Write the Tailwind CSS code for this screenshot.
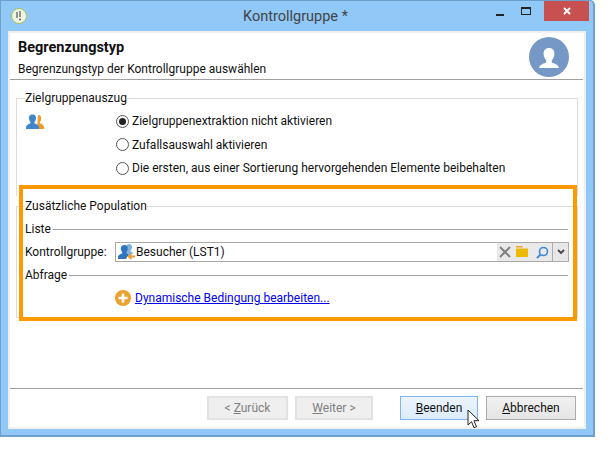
<!DOCTYPE html>
<html lang="de">
<head>
  <meta charset="UTF-8">
  <title>Kontrollgruppe</title>
  <script src="https://cdn.jsdelivr.net/npm/@tailwindcss/browser@4"></script>
</head>
<body class="bg-white w-[615px] h-[467px] overflow-hidden relative font-['Roboto',sans-serif] text-[12px] text-[#111]">
  <div class="w-[595px] h-[437px] flex flex-col bg-[#90c8f8] border border-[#6f9fcb] rounded-tr-[5px] border-b-2 border-r-2">
    <!-- title bar -->
    <div class="h-[30px] shrink-0 flex items-center relative">
      <svg class="ml-[10px] w-[16px] h-[16px]" viewBox="0 0 16 16">
        <circle cx="8" cy="8" r="7.5" fill="#eef3e2" stroke="#a4c25c"/>
        <path d="M6 4v6M9 3v6" stroke="#777" stroke-width="1.5"/>
        <circle cx="9" cy="11.5" r="1" fill="#555"/>
      </svg>
      <span class="absolute left-[242px] top-[5px] text-[14.5px] text-[#444]">Kontrollgruppe *</span>
      <div class="ml-auto flex items-start self-start mr-[4px]">
        <div class="w-[20px] h-[20px] flex items-end justify-center pb-[5px] mr-[6px]"><div class="w-[8px] h-[2px] bg-[#222]"></div></div>
        <div class="w-[20px] h-[20px] flex items-center justify-center mr-[8px]"><div class="w-[10px] h-[8px] border border-t-2 border-[#222]"></div></div>
        <div class="w-[45px] h-[20px] bg-[#c75050] flex items-center justify-center">
          <svg class="w-[8px] h-[8px]" viewBox="0 0 8 8"><path d="M1 1l6 6M7 1l-6 6" stroke="#fff" stroke-width="1.8"/></svg>
        </div>
      </div>
    </div>

    <!-- client area -->
    <div class="flex-1 mx-[7px] mb-[6px] bg-white border-2 border-[#f0f0f0] flex flex-col">
      <div class="h-[47px] shrink-0 flex border-b border-[#a0a0a0] mr-[1px] relative overflow-hidden">
        <div class="pl-[8px]">
          <h1 class="font-bold text-[14.5px] leading-[18px] mt-[6px]">Begrenzungstyp</h1>
          <p class="leading-[17px] mt-[4px]">Begrenzungstyp der Kontrollgruppe auswählen</p>
        </div>
        <div class="absolute left-[519px] top-[4px] w-[40px] h-[40px] rounded-full bg-[#7698c6]">
          <svg class="w-[40px] h-[40px]" viewBox="0 0 40 40">
            <path d="M20 11c3.6 0 5.6 2.6 5.4 6-.2 3-1.4 5-2.6 6.200v2.200c2.400 1.200 6.800 2 7.200 5.600H10c.4-3.600 4.800-4.400 7.200-5.600v-2.200c-1.200-1.200-2.400-3.200-2.600-6.200-.2-3.400 1.800-6 5.400-6z" fill="#fff"/>
          </svg>
        </div>
      </div>

      <div class="flex-1 flex flex-col pl-[6px]">
        <!-- group 1 -->
        <fieldset class="mt-[10px] h-[106px] border border-[#dcdcdc] border-b-0 mr-[6px] relative">
          <legend class="ml-[8px] leading-[16px] bg-white">Zielgruppenauszug</legend>
          <svg class="absolute left-[9px] top-[8px] w-[18px] h-[16px]" viewBox="0 0 18 16">
            <path d="M12 1c2.500 0 3.500 2 3.200 4-.2 1.500-.8 2.500-1.400 3v1c1 .6 3.800 1.200 4.200 4v2h-7z" fill="#ef9a2d"/>
            <path d="M6.500 .5c2.800 0 3.800 2.200 3.500 4.300-.2 1.600-.9 2.700-1.500 3.300v1.200c1.200.6 4 1.300 4.500 4V15H0v-1.700c.5-2.700 3.300-3.400 4.500-4V8.100C3.900 7.500 3.200 6.400 3 4.800 2.700 2.700 3.700 .5 6.500 .5z" fill="#3d86cc"/>
          </svg>
          <div class="ml-[99px] mt-[3px] flex flex-col">
            <label class="h-[24px] flex items-center gap-[3px]">
              <span class="w-[13px] h-[13px] rounded-full border border-[#555] flex items-center justify-center"><span class="w-[7px] h-[7px] rounded-full bg-[#222]"></span></span>
              Zielgruppenextraktion nicht aktivieren
            </label>
            <label class="h-[23px] flex items-center gap-[3px]">
              <span class="w-[13px] h-[13px] rounded-full border border-[#555]"></span>
              Zufallsauswahl aktivieren
            </label>
            <label class="h-[24px] flex items-center gap-[3px]">
              <span class="w-[13px] h-[13px] rounded-full border border-[#555]"></span>
              Die ersten, aus einer Sortierung hervorgehenden Elemente beibehalten
            </label>
          </div>
        </fieldset>

        <!-- group 2 -->
        <fieldset class="mt-[2px] h-[120px] border border-[#dcdcdc] mr-[6px]">
          <legend class="ml-[8px] leading-[16px] bg-white">Zusätzliche Population</legend>
          <div class="pl-[8px] pr-[9px] flex flex-col">
            <div class="h-[16px] mt-[7px] flex items-center gap-[2px]"><span>Liste</span><div class="flex-1 h-px bg-[#a0a0a0]"></div></div>
            <div class="mt-[5px] mr-[-1px] h-[20px] flex items-center">
              <span class="w-[90px] shrink-0">Kontrollgruppe:</span>
              <div class="flex-1 h-[20px] border border-[#a8a8a8] border-r-0 flex items-center pl-[1px]">
                <svg class="w-[18px] h-[18px] shrink-0" viewBox="0 0 18 18">
                  <path d="M12 1c2.500 0 3.200 2 3 3.500-.2 1.500-.8 2.400-1.300 2.900v1.200c1 .5 2 .9 2.500 1.800L9 14V3c.6-1.200 1.800-2 3-2z" fill="#7fb0e0"/>
                  <path d="M7.500 2c2.600 0 3.500 2.200 3.200 4-.2 1.500-.9 2.500-1.400 3v1.300c.8.400 1.700.7 2.300 1.200L9 16H1v-2.200c.4-2.200 3.200-3 4.200-3.500V9C4.700 8.500 4 7.500 3.800 6 3.500 4.200 4.900 2 7.500 2z" fill="#2f75bd"/>
                  <path d="M18 12.500h-3.500V10L10 13.500l4.500 3.500v-2.500H18z" fill="#ef9a2d"/>
                </svg>
                <span class="ml-[1px]">Besucher (LST1)</span>
                <div class="ml-auto h-[18px] w-[55px] bg-[#e9e9e9] flex items-center gap-[5px] pl-[2px]">
                  <svg class="w-[12px] h-[12px]" viewBox="0 0 12 12"><path d="M1 1l10 10M11 1L1 11" stroke="#808080" stroke-width="2"/></svg>
                  <svg class="w-[12px] h-[12px]" viewBox="0 0 12 12"><path d="M0 0h6l1 1.500H0z" fill="#f59e2a"/><path d="M0 2.500h12V11H0z" fill="#eeb902"/></svg>
                  <svg class="w-[13px] h-[13px] ml-[3px]" viewBox="0 0 13 13"><circle cx="7.500" cy="5.500" r="4" fill="none" stroke="#3f8ad8" stroke-width="1.600"/><path d="M4.500 8.500L1 12" stroke="#3f8ad8" stroke-width="2"/></svg>
                </div>
              </div>
              <div class="w-[17px] h-[20px] shrink-0 bg-[#e8e8e8] border border-[#acacac] flex items-center justify-center">
                <svg class="w-[8px] h-[6px]" viewBox="0 0 8 6"><path d="M1 1l3 3 3-3" fill="none" stroke="#444" stroke-width="1.800"/></svg>
              </div>
            </div>
            <div class="h-[16px] mt-[5px] flex items-center gap-[2px]"><span>Abfrage</span><div class="flex-1 h-px bg-[#a0a0a0]"></div></div>
            <div class="mt-[6px] h-[18px] ml-[90px] flex items-center gap-[4px]">
              <svg class="w-[16px] h-[16px]" viewBox="0 0 16 16"><circle cx="8" cy="8" r="8" fill="#eda12f"/><path d="M8 3.500v9M3.500 8h9" stroke="#fff" stroke-width="2.600"/></svg>
              <a href="#" class="text-[#0000ee] underline">Dynamische Bedingung bearbeiten...</a>
            </div>
          </div>
        </fieldset>
      </div>

      <!-- footer -->
      <div class="h-[39px] shrink-0 border-t border-[#a0a0a0] mr-[1px] flex items-start pt-[7px]">
        <button class="ml-[197px] w-[81px] h-[24px] bg-[#efefef] border-2 border-[#e2e2e2] text-[#808080]">&lt; <span class="underline">Z</span>urück</button>
        <button class="ml-[7px] w-[78px] h-[24px] bg-[#efefef] border-2 border-[#e2e2e2] text-[#808080]"><span class="underline">W</span>eiter &gt;</button>
        <button class="ml-[27px] w-[78px] h-[24px] bg-gradient-to-b from-[#ecf4fc] to-[#dcecfc] border border-[#7eb4ea]"><span class="underline">B</span>eenden</button>
        <button class="ml-[8px] w-[90px] h-[24px] bg-gradient-to-b from-[#f0f0f0] to-[#e5e5e5] border border-[#acacac]"><span class="underline">A</span>bbrechen</button>
      </div>
    </div>
  </div>

  <!-- highlight and pointer lie over the dialog -->
  <div class="absolute left-[19px] top-[185px] w-[558px] h-[136px] border-4 border-[#ff9900]"></div>
  <svg class="absolute left-[467px] top-[409px] w-[13px] h-[20px]" viewBox="0 0 13 20">
    <path d="M1 1v15l3.500-3.300 2.500 6 2.500-1-2.500-6H12z" fill="#fff" stroke="#222" stroke-width="1"/>
  </svg>
</body>
</html>
